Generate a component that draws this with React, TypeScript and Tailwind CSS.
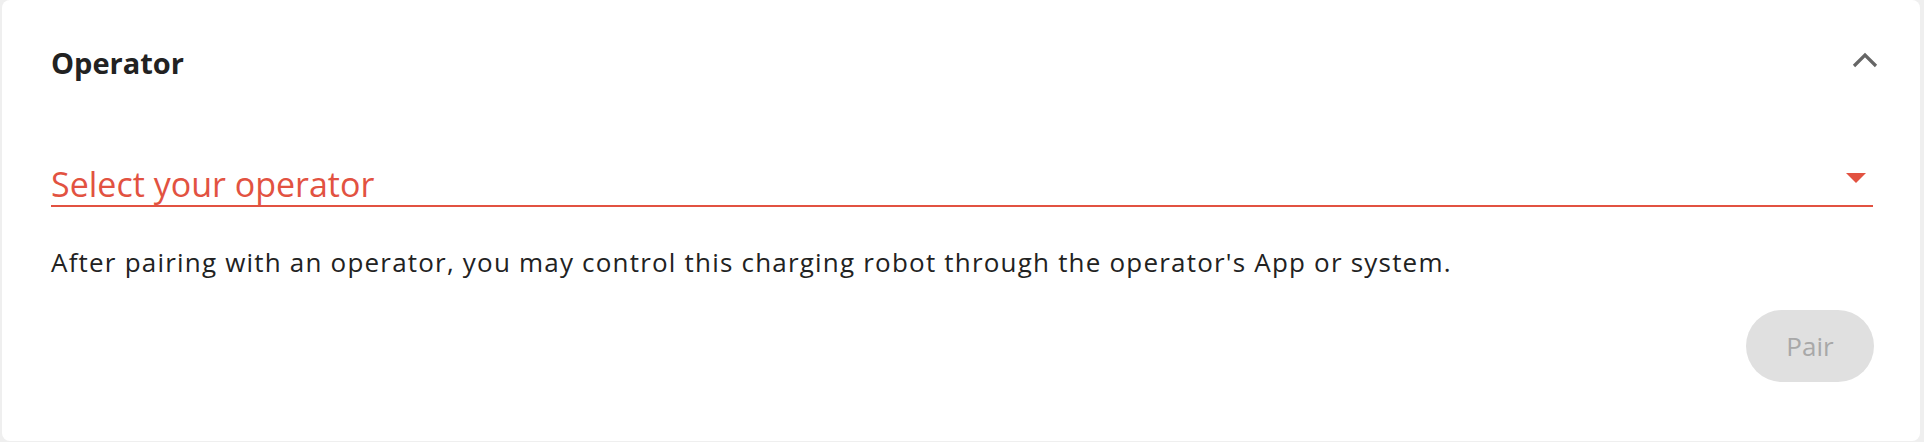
import { useState } from "react";

const font = { fontFamily: "'Open Sans', 'Noto Sans', sans-serif" };

export default function App() {
  const [open, setOpen] = useState(true);

  return (
    <div className="min-h-screen bg-[#efefef] pl-[2px] pr-[4px]" style={font}>
      <div className="h-[441px] rounded-[8px] bg-white pl-[49px] pr-[47px] pt-[46px]">
        <div className="flex items-start justify-between">
          <h2 className="text-[29px] font-bold leading-[34px] text-[#222222]">Operator</h2>
          <button
            type="button"
            aria-label="Collapse"
            onClick={() => setOpen(!open)}
            className="mr-[-5px] mt-[6px] text-[#666666]"
          >
            <svg width="26" height="16" viewBox="0 0 26 16" fill="none">
              <path d="M2 14L13 3l11 11" stroke="currentColor" strokeWidth="3.2" />
            </svg>
          </button>
        </div>

        <div className="mt-[83px] flex items-start justify-between border-b-2 border-[#e25241]">
          <span className="text-[34px] leading-[42px] text-[#e25241]">Select your operator</span>
          <svg className="mr-[7px] mt-[10px]" width="20" height="10" viewBox="0 0 20 10">
            <path d="M0 0h20L10 10z" fill="#e25241" />
          </svg>
        </div>

        <p className="mt-[39px] text-[26px] leading-[32px] tracking-[1.2px] text-[#222222]">
          After pairing with an operator, you may control this charging robot through the operator's App or system.
        </p>

        <div className="mt-[32px] flex justify-end">
          <button
            type="button"
            disabled
            className="mr-[-1px] h-[72px] w-[128px] rounded-full bg-[#e0e0e0] text-[26px] text-[#a8a8a8]"
          >
            Pair
          </button>
        </div>
      </div>
    </div>
  );
}
